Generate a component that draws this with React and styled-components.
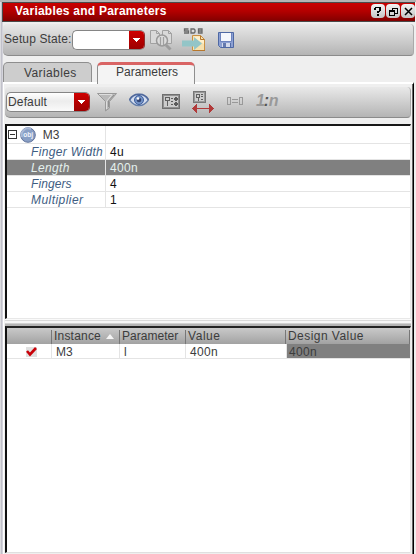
import React from 'react';
import styled, { createGlobalStyle, css } from 'styled-components';

const Global = createGlobalStyle`
  * { box-sizing: border-box; }
  body { margin: 0; background: #efefef; overflow: hidden; }
`;

const Window = styled.main`
  width: 416px; height: 554px; display: flex; flex-direction: column;
  border-top: 2px solid #b4b4b4;
  background: linear-gradient(90deg, #dcdce0 0 1px, #c1c1ca 1px 2px, #d4d4dc 2px 3px, #efefef 3px);
  font: 12px/15px "Liberation Sans", Arial, sans-serif; color: #3c3c3c;
`;
const Text = styled.span`
  white-space: pre; letter-spacing: ${p => p.$gap || 0}px;
`;
const TitleBar = styled.header`
  height: 20px; flex: none; margin-left: 2px; padding: 0 0 2px 12px; display: flex; align-items: center;
  border: 1px solid #4a4a4a; border-right: 0; color: #fff; font-weight: bold;
  background: linear-gradient(#c90000, #b40000 45%, #820000);
  margin-right: 1px;
  & > span { flex: 1; }
`;
const WindowButton = styled.button`
  width: 14px; height: 14px; margin: 0 0 0 1px; padding: 0; border: 0; border-radius: 4px;
  background: linear-gradient(#f4f4f4, #c4c4c4); display: grid; place-items: center;
`;
const Toolbar = styled.div`
  display: flex; align-items: center; flex: none;
  border-bottom: 1px solid #8b8b8b; border-right: 1px solid #aaa; border-radius: 4px 4px 4px 5px;
  background: linear-gradient(#e9e9e9, #d4d4d4 40%, #b4b4b4);
`;
const SetupBar = styled(Toolbar)`
  height: 32px; margin: 2px 2px 0 3px; padding-left: 1px;
`;
const SetupLabel = styled.div`
  width: 68px; flex: none;
`;
const FilterBar = styled(Toolbar)`
  height: 31px; margin: 3px 1px 0 0; padding-left: 1px;
`;
const Select = styled.div`
  width: ${p => p.$w}px; height: 20px; flex: none; display: flex; align-items: center;
  padding-left: 1px;
  border-radius: 5px; border: 1px solid #858585; border-right-color: #8b3030;
  background: ${p => p.$plain ? '#fff' : 'linear-gradient(#fff, #ececec 45%, #fafafa)'};
  overflow: hidden;
  & > span { flex: 1; }
`;
const Arrow = styled.div`
  width: 15px; height: 18px; display: grid; place-items: center;
  background: linear-gradient(#cf0000, #9c0000);
`;
const Icon = styled.svg`
  display: block; flex: none; margin-left: ${p => p.$left || 0}px;
  margin-top: ${p => p.$top || 0}px;
`;
const Tabs = styled.nav`
  height: 20px; margin: 6px 0 0 3px; display: flex; gap: 5px; flex: none;
`;
const Tab = styled.div`
  width: ${p => p.$w}px; height: 20px; padding-top: 3px; padding-left: 20px;
  border: 1px solid #8e8e8e; border-bottom: 0; border-radius: 5px 5px 0 0;
  background: #cdcdcd;
  ${p => p.$active && css`
    height: 22px; padding-top: 0; padding-left: 18px; background: #f4f4f4; z-index: 1;
    border-top: 3px solid #d96464;
  `}
`;
const Frame = styled.section`
  flex: 1; min-height: 0; display: flex; flex-direction: column; margin: 0 2px 0 3px;
  width: 411px; padding-left: 1px; border-left: 1px solid #fff; border-top: 2px solid #fff;
  border-right: 1px solid #000; box-shadow: inset -1px 0 #666;
  padding-right: 1px;
`;
const Tree = styled.div`
  height: 195px; margin: 6px 1px 0 0; flex: none; background: #fff;
  border-top: 2px solid #000; border-left: 2px solid #111; border-right: 1px solid #e8e8e8; border-bottom: 1px solid #e8e8e8;
  border-top-color: #181818;
`;
const TreeRow = styled.div`
  height: 16px; display: grid; grid-template-columns: 99px 1fr; line-height: 16px;
  border-bottom: 1px solid #e4e4e4;
`;
const GroupRow = styled(TreeRow)`
  height: 18px;
`;
const NameCell = styled.div`
  height: 15px; padding-left: 24px; border-right: 1px solid #e4e4e4;
  font-style: italic; color: ${p => p.$selected ? '#e4f1ee' : '#3e5d82'};
  background: ${p => p.$selected ? '#808080' : '#fff'};
`;
const GroupCell = styled.div`
  display: flex; align-items: center; padding-left: 1px; border-right: 1px solid #e4e4e4;
`;
const ValueCell = styled.div`
  height: 15px; padding-left: 4px; color: ${p => p.$selected ? '#e4f1ee' : '#111'};
  background: ${p => p.$selected ? '#808080' : '#fff'};
`;
const Splitter = styled.div`
  height: 7px; flex: none; margin-right: 1px;
  background: linear-gradient(#fafafa 0 1px, #d9d9d9 1px 2px, #f6f6f6 2px 4px, #d0d0d0 4px 5px, #b4b4b4 5px);
`;
const Grid = styled.div`
  flex: 1; min-height: 0; margin-right: 1px; margin-bottom: 1px; background: #fff;
  border-top: 2px solid #222; border-left: 2px solid #111; border-right: 1px solid #e8e8e8; border-bottom: 1px solid #e0e0e0;
`;
const GridRow = styled.div`
  display: grid; grid-template-columns: 45px 68px 66px 101px 1fr;
  height: 15px; border-bottom: 1px solid #e4e4e4;
`;
const HeadRow = styled(GridRow)`
  grid-template-columns: 45px 68px 66px 100px 1fr;
  height: 16px; border-bottom: 0; background: linear-gradient(#c9c9c9, #a2a2a2);
`;
const Head = styled.div`
  padding-left: 2px; display: flex; align-items: center; border-right: 1px solid #777;
  height: 14px; margin-top: 2px; line-height: 14px; padding-bottom: 2px;
`;
const Cell = styled.div`
  height: 14px; padding-left: 4px; line-height: 16px; border-right: 1px solid ${p => p.$shade ? '#808080' : '#e4e4e4'};
  background: ${p => p.$shade ? '#808080' : '#fff'};
  ${p => p.$shade && css`padding-left: 2px;`}
`;
const CheckCell = styled(Cell)`
  padding-left: 19px;
`;

const DownArrow = () => (
  <Arrow><svg width="7" height="4" shapeRendering="crispEdges"><path d="M0 0H7L3.5 4Z" fill="#fff" /></svg></Arrow>
);

const CompareIcon = () => (
  <Icon $left={5} width="23" height="24" viewBox="0 0 23 24" fill="none">
    <path d="M.5 2.500H6.500L9.500 5.500V15.500H.5ZM12.500 2.500H18.500L21.500 5.500V15.500H12.500Z" fill="#d9d9d9" stroke="#a1a1a1" />
    <path d="M6.500 2.500V5.500H9.500M18.500 2.500V5.500H21.500" stroke="#a1a1a1" />
    <circle cx="12" cy="12.500" r="5.500" fill="#dcdcdc" stroke="#999" strokeWidth="1.500" />
    <path d="M10.500 9V17M13.500 9V17" stroke="#a0a0a0" strokeWidth="1.300" />
    <path d="M16 17L20.500 21.500" stroke="#9c9c9c" strokeWidth="3" />
  </Icon>
);
const SdbIcon = () => (
  <Icon $left={9} width="24" height="24" viewBox="0 0 24 24" fill="none">
    <path d="M6.500 1H2.500V3H6.500V5H2M9 1H12L13 2V4L12 5H9ZM16.500 1H20V5H16.500ZM16.500 3H20.500" stroke="#686868" strokeWidth="1.300" />
    <path d="M10.500 7.500H18.500L22.500 11.500V22.500H10.500Z" fill="#f6e1ae" stroke="#c99142" />
    <path d="M12 8.500H18V12H22V16Q16 11 12 13Z" fill="#fff0cc" />
    <path d="M18.500 7.500V11.500H22.500M11 22.500H23" stroke="#b7772d" />
    <path d="M0 12.500H12V9L20 15.500L12 22V18.500H0Z" fill="#93c5c7" />
  </Icon>
);
const SaveIcon = () => (
  <Icon $left={12} width="16" height="16" viewBox="0 0 16 16" fill="none">
    <path d="M.5.5H15.500V15.500H2.500L.5 13.500Z" fill="#8ca0d3" stroke="#4e68a4" />
    <path d="M3 1H13V9H3Z" fill="#f4f6fc" /><path d="M2.500 1V9.500H13.500V1" stroke="#6d83bd" />
    <path d="M4 11H12V15H4Z" fill="#d4daec" /><path d="M5 11H8V15H5Z" fill="#6479ae" /><path d="M12.500 11V15" stroke="#536ba5" />
  </Icon>
);
const FilterIcon = () => (
  <Icon $left={7} width="20" height="20" viewBox="0 0 20 20">
    <path d="M.5 1.500H19.500L12.500 9.500V16L8.500 19V9.500Z" fill="#b9b9b9" stroke="#999" />
    <path d="M2 2.500H15L9.500 9.500V17" fill="none" stroke="#dedede" /><path d="M17 3L11.500 9V15" fill="none" stroke="#8f8f8f" />
  </Icon>
);
const EyeIcon = () => (
  <Icon $left={12} $top={-4} width="20" height="14" viewBox="0 0 20 14" fill="none">
    <path d="M.5 7Q4 1 10 1.500Q16 1 19.500 7Q15 13 10 12.500Q4 13 .5 7Z" fill="#d3ddef" />
    <path d="M.5 7Q4 1 10 1.500Q16 1 19.500 7" stroke="#4f689c" strokeWidth="1.800" />
    <path d="M.5 7Q5 13 10 12.500Q15 13 19.500 7" stroke="#637da9" strokeWidth="1.300" />
    <circle cx="10" cy="7" r="4.500" fill="#7594c7" stroke="#3e5d9c" /><circle cx="10" cy="7" r="2.300" fill="#344776" /><circle cx="9" cy="5.500" r="1.300" fill="#fff" />
  </Icon>
);
const ParamsIcon = () => (
  <Icon $left={13} $top={-1} width="18" height="15" viewBox="0 0 18 15" fill="none" shapeRendering="crispEdges">
    <path d="M.5.5H17.500V14.500H.5Z" fill="#ccc" stroke="#707070" /><path d="M1.500 1.500H16.500V13.500H1.500Z" stroke="#909090" />
    <path d="M3.500 3.500H7.500V6.500H3.500ZM5.500 6.500V12M9 4.500H11M9 10.500H11" stroke="#606060" />
    <path d="M12 4H13V3H15V4H16V6H15V7H13V6H12ZM12 9H13V8H15V9H16V11H15V12H13V11H12ZM9 7H11V8H9Z" fill="#5c5c5c" />
  </Icon>
);
const WidthIcon = () => (
  <Icon $left={12} width="22" height="23" viewBox="0 0 22 23" fill="none" shapeRendering="crispEdges">
    <path d="M1.500.5H13.500V11.500H1.500Z" fill="#cecece" stroke="#777" /><path d="M2.500 1.500H12.500V10.500H2.500Z" stroke="#999" />
    <path d="M4.500 3.500H7.500V6.500H4.500ZM6.500 7V10M9 3.500H11M9 5.500H11M9 8.500H11" stroke="#606060" />
    <path d="M4 17.500H18" stroke="#b13a3a" /><path d="M0 17.500L5 13V22ZM22 17.500L17 13V22Z" fill="#b13a3a" />
  </Icon>
);
const MatchIcon = () => (
  <Icon $left={13} $top={-2} width="16" height="8" viewBox="0 0 16 8" fill="none" shapeRendering="crispEdges">
    <path d="M.5.5H3.500V7.500H.5ZM12.500.5H15.500V7.500H12.500ZM5 2.500H11M5 5.500H11" stroke="#999" />
  </Icon>
);
const RatioLabel = styled.span`
  margin: -2px 0 0 13px; color: #999; font: italic bold 16px/20px "Liberation Sans", Arial, sans-serif;
  letter-spacing: -1.2px;
  & b { color: #555; margin-right: 1px; }
`;
const ObjectIcon = () => (
  <Icon $left={3} width="16" height="16" viewBox="0 0 16 16">
    <circle cx="8" cy="8" r="7.300" fill="#899fc5" stroke="#60739b" />
    <path d="M2 10A6.500 6.500 0 0 1 11 2" fill="none" stroke="#a9b9d6" strokeWidth="2" />
    <text x="3.300" y="10.200" fontSize="6.500" fontWeight="bold" fill="#f1f5fc">obj</text>
  </Icon>
);

const parameters = [
  ['Finger Width', '4u', .35], ['Length', '400n', .35], ['Fingers', '4', .1], ['Multiplier', '1', .45],
];

export default function App() {
  return <>
    <Global />
    <Window>
      <TitleBar>
        <Text $gap={.23}>Variables and Parameters</Text>
        <WindowButton aria-label="Help"><svg width="8" height="9" viewBox="0 0 8 9" fill="none" shapeRendering="crispEdges"><path d="M0 1H2V3H0ZM1 0H7V1H1ZM5 1H7V4H5ZM3 4H6V5H3ZM3 5H5V6H3ZM3 7H5V9H3Z" fill="#000" /></svg></WindowButton>
        <WindowButton aria-label="Restore"><svg width="9" height="9" fill="none" shapeRendering="crispEdges"><path d="M3 3V1H8V6H6M3 1.500H8M.5 3.500H5.500V8.500H.5ZM0 4.500H6" stroke="#000" /></svg></WindowButton>
        <WindowButton aria-label="Close"><svg width="9" height="9" fill="none"><path d="M1 1L8 8M8 1L1 8" stroke="#000" strokeWidth="1.500" /></svg></WindowButton>
      </TitleBar>
      <SetupBar>
        <SetupLabel><Text $gap={.12}>Setup State:</Text></SetupLabel>
        <Select $w={73} $plain><span /><DownArrow /></Select>
        <CompareIcon /><SdbIcon /><SaveIcon />
      </SetupBar>
      <Tabs>
        <Tab $w={89}><Text $gap={.4}>Variables</Text></Tab>
        <Tab $w={98} $active><Text $gap={0}>Parameters</Text></Tab>
      </Tabs>
      <Frame>
        <FilterBar>
          <Select $w={84}><Text $gap={.15}>Default</Text><DownArrow /></Select>
          <FilterIcon /><EyeIcon /><ParamsIcon /><WidthIcon /><MatchIcon />
          <RatioLabel>1<b>:</b>n</RatioLabel>
        </FilterBar>
        <Tree>
          <GroupRow>
            <GroupCell>
              <svg width="9" height="9" fill="none" shapeRendering="crispEdges"><path d="M.5.5H8.500V8.500H.5ZM2 4.500H7" stroke="#333" /></svg>
              <ObjectIcon /><Text>{'  M3'}</Text>
            </GroupCell>
            <ValueCell />
          </GroupRow>
          {parameters.map(([name, value, gap]) => (
            <TreeRow key={name}>
              <NameCell $selected={name === 'Length'}><Text $gap={gap}>{name}</Text></NameCell>
              <ValueCell $selected={name === 'Length'}><Text $gap={.35}>{value}</Text></ValueCell>
            </TreeRow>
          ))}
        </Tree>
        <Splitter />
        <Grid>
          <HeadRow>
            <Head />
            <Head><Text $gap={.2}>Instance</Text><Icon $left={5} width="8" height="5"><path d="M0 5H8L4 0Z" fill="#f5f5f5" /></Icon></Head>
            <Head><Text $gap={.03}>Parameter</Text></Head>
            <Head><Text $gap={.55}>Value</Text></Head>
            <Head><Text $gap={.45}>Design Value</Text></Head>
          </HeadRow>
          <GridRow>
            <CheckCell><Icon $top={3} width="11" height="10" fill="none"><path d="M0 0H11V10H0Z" fill="#e0e0e0" /><path d="M1 4L4 7.500L10 1" stroke="#c90008" strokeWidth="2.600" /></Icon></CheckCell>
            <Cell><Text>M3</Text></Cell><Cell><Text>l</Text></Cell><Cell><Text $gap={.3}>400n</Text></Cell><Cell $shade><Text $gap={.3}>400n</Text></Cell>
          </GridRow>
        </Grid>
      </Frame>
    </Window>
  </>;
}
